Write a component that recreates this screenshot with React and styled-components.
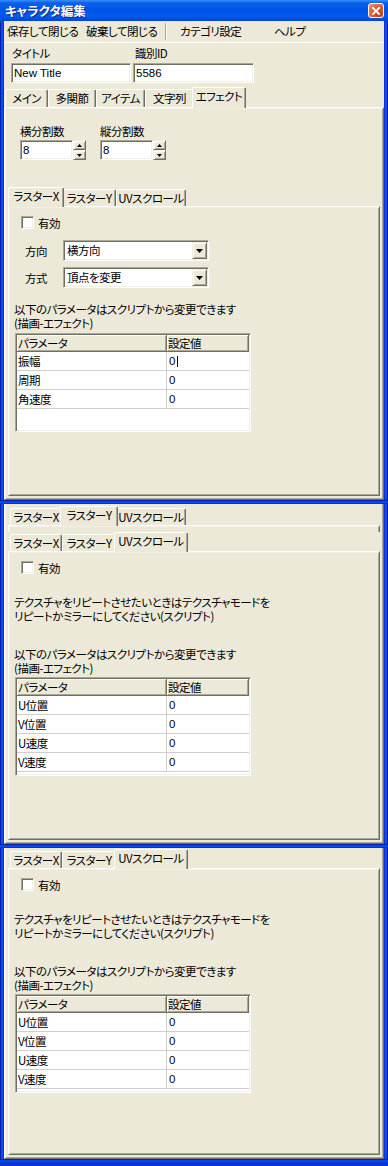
import React from "react";
import styled, { createGlobalStyle, css } from "styled-components";

const C = {
  face: "#ECE9D8",
  hi: "#FFFFFF",
  light: "#F1EFE2",
  shadow: "#ACA899",
  dark: "#716F64",
  grid: "#CFCFCF",
};

const GlobalStyle = createGlobalStyle`
  html, body { margin: 0; padding: 0; }
  body {
    background: ${C.face};
    font-family: "Noto Sans CJK JP", "Noto Sans", sans-serif;
    font-size: 11.5px;
    letter-spacing: -0.5px;
    color: #000;
    font-feature-settings: "palt";
  }
  #root { width: 388px; height: 1166px; overflow: hidden; }
`;

const sunken = css`
  border: 1px solid;
  border-color: ${C.shadow} ${C.hi} ${C.hi} ${C.shadow};
  box-shadow: inset 1px 1px ${C.dark}, inset -1px -1px ${C.light};
`;

const raised = css`
  border: 1px solid;
  border-color: ${C.light} ${C.dark} ${C.dark} ${C.light};
  box-shadow: inset 1px 1px ${C.hi}, inset -1px -1px ${C.shadow};
`;

const ascii = css`
  font-family: "Liberation Sans", "Noto Sans CJK JP", sans-serif;
  font-size: 11.5px;
  letter-spacing: 0;
`;

const Page = styled.div`
  width: 388px;
  height: 1166px;
  display: flex;
  flex-direction: column;
  overflow: hidden;
`;

const TitleBar = styled.div`
  height: 21px;
  flex: none;
  display: flex;
  align-items: center;
  justify-content: space-between;
  padding: 0 4px 0 5px;
  box-sizing: border-box;
  background: linear-gradient(
    180deg,
    #3b8ffb 0%,
    #0a60ea 14%,
    #0054e3 45%,
    #0058ec 82%,
    #0044cc 100%
  );
`;

const TitleText = styled.div`
  color: #fff;
  font-weight: bold;
  font-size: 12.5px;
  line-height: 21px;
  letter-spacing: 0;
  text-shadow: 1px 1px #0b2a8c;
`;

const CloseButton = styled.div`
  width: 16px;
  height: 15px;
  box-sizing: border-box;
  border: 1px solid #fff;
  border-radius: 3px;
  background: radial-gradient(circle at 75% 80%, #c0391a 0%, #e1603b 55%, #f0987a 100%);
  display: flex;
  align-items: center;
  justify-content: center;
`;

const Frame = styled.div`
  flex: none;
  height: ${(p) => p.$h}px;
  box-sizing: border-box;
  display: flex;
  flex-direction: column;
  padding: 0 4px;
  background: linear-gradient(
    to right,
    #0020b0 0 1px,
    #0a4cf0 1px 3px,
    #0834d0 3px 4px,
    ${C.face} 4px calc(100% - 4px),
    #0834d0 calc(100% - 4px) calc(100% - 3px),
    #0a4cf0 calc(100% - 3px) calc(100% - 1px),
    #0020a0 calc(100% - 1px)
  );
`;

const BlueBar = styled.div`
  flex: none;
  height: ${(p) => p.$h}px;
  background: linear-gradient(to bottom, #0020a8 0 1px, #0a46e8 1px 3px, #0836d4 3px);
`;

const MenuBar = styled.div`
  height: 22px;
  flex: none;
  box-sizing: border-box;
  display: flex;
  align-items: center;
  padding-left: 3px;
  border-bottom: 1px solid ${C.hi};
`;

const MenuItem = styled.div`
  width: ${(p) => p.$w}px;
  flex: none;
  line-height: 21px;
  white-space: nowrap;
`;

const MenuSeparator = styled.div`
  width: 0;
  height: 17px;
  border-left: 1px solid ${C.shadow};
  border-right: 1px solid ${C.hi};
  margin-right: 13px;
`;

const FieldRow = styled.div`
  height: 44px;
  flex: none;
  box-sizing: border-box;
  display: flex;
  gap: 2px;
  padding: 3px 0 0 7px;
`;

const Field = styled.div`
  width: ${(p) => p.$w}px;
  display: flex;
  flex-direction: column;
`;

const FieldLabel = styled.div`
  height: 14px;
  line-height: 14px;
  padding-left: ${(p) => p.$pl ?? 1}px;
  margin-bottom: 3px;
  white-space: nowrap;
`;

const TextInput = styled.div`
  height: 20px;
  box-sizing: border-box;
  ${sunken};
  background: #fff;
  padding-left: 2px;
  line-height: 18px;
  white-space: nowrap;
  ${ascii};
`;

const TabStrip = styled.div`
  flex: none;
  height: ${(p) => p.$h}px;
  display: flex;
  align-items: flex-end;
  padding-left: ${(p) => p.$pad}px;
  margin-left: ${(p) => p.$ml || 0}px;
  margin-top: ${(p) => p.$mt || 0}px;
`;

const Tab = styled.div`
  flex: none;
  box-sizing: border-box;
  width: ${(p) => p.$w + (p.$active ? 4 : 0)}px;
  height: ${(p) => (p.$active ? p.$h + 1 : p.$h - 2)}px;
  margin: 0 ${(p) => (p.$active ? -2 : 0)}px ${(p) => (p.$active ? -1 : 0)}px;
  border-top: 1px solid ${C.hi};
  border-left: 1px solid ${C.hi};
  border-right: 1px solid ${C.dark};
  box-shadow: inset -1px 0 ${C.shadow};
  border-radius: 2px 2px 0 0;
  background: ${C.face};
  text-align: center;
  line-height: 16px;
  white-space: nowrap;
  position: relative;
  z-index: ${(p) => (p.$active ? 1 : 0)};
`;

const OuterPanel = styled.div`
  flex: 1;
  min-height: 0;
  box-sizing: border-box;
  display: flex;
  flex-direction: column;
  border-left: 1px solid ${C.hi};
  border-right: 1px solid ${C.dark};
  border-bottom: 1px solid ${C.dark};
  border-top: ${(p) => (p.$continued ? "none" : `1px solid ${C.hi}`)};
  box-shadow: inset 1px ${(p) => (p.$continued ? 0 : 1)}px ${C.light},
    inset -1px -1px ${C.shadow};
  padding-top: ${(p) => p.$pt || 0}px;
`;

const InnerPanel = styled.div`
  flex: ${(p) => (p.$clip ? "none" : 1)};
  height: ${(p) => (p.$clip ? "7px" : "auto")};
  min-height: 0;
  box-sizing: border-box;
  display: flex;
  flex-direction: column;
  margin: 0 3px ${(p) => (p.$clip ? 0 : 3)}px 3px;
  border-top: 1px solid ${C.hi};
  border-left: 1px solid ${C.hi};
  border-right: 1px solid ${C.dark};
  border-bottom: ${(p) => (p.$clip ? "none" : `1px solid ${C.dark}`)};
  box-shadow: inset 1px 1px ${C.light},
    inset -1px ${(p) => (p.$clip ? 0 : -1)}px ${C.shadow};
`;

const SpinRow = styled.div`
  display: flex;
  gap: 14px;
  margin: 17px 0 0 15px;
`;

const SpinGroup = styled.div`
  display: flex;
  flex-direction: column;
`;

const SpinLabel = styled.div`
  line-height: 13px;
  height: 13px;
  margin-bottom: 2px;
  white-space: nowrap;
`;

const SpinBox = styled.div`
  display: flex;
`;

const SpinInput = styled.div`
  width: 53px;
  height: 20px;
  box-sizing: border-box;
  ${sunken};
  background: #fff;
  padding-left: 2px;
  line-height: 18px;
  ${ascii};
`;

const SpinButtons = styled.div`
  width: 13px;
  height: 20px;
  display: flex;
  flex-direction: column;
`;

const SpinButton = styled.div`
  flex: 1;
  box-sizing: border-box;
  ${raised};
  background: ${C.face};
  display: flex;
  align-items: center;
  justify-content: center;
`;

const CheckRow = styled.div`
  display: flex;
  align-items: center;
  gap: 4px;
  height: 13px;
  margin: 9px 0 0 12px;
`;

const CheckBox = styled.div`
  width: 13px;
  height: 13px;
  box-sizing: border-box;
  ${sunken};
  background: #fff;
`;

const SelectRow = styled.div`
  display: flex;
  align-items: center;
  margin: ${(p) => p.$mt}px 0 0 16px;
`;

const SelectLabel = styled.div`
  width: 38px;
  white-space: nowrap;
`;

const Select = styled.div`
  width: 146px;
  height: 21px;
  box-sizing: border-box;
  ${sunken};
  background: #fff;
  padding: 1px;
  display: flex;
  align-items: center;
`;

const SelectText = styled.div`
  flex: 1;
  padding-left: 2px;
  line-height: 17px;
  white-space: nowrap;
`;

const DropButton = styled.div`
  width: 15px;
  height: 17px;
  box-sizing: border-box;
  ${raised};
  background: ${C.face};
  display: flex;
  align-items: center;
  justify-content: center;
`;

const Note = styled.div`
  margin: ${(p) => p.$mt}px 0 0 5px;
  line-height: 14px;
  white-space: nowrap;
`;

const ListView = styled.div`
  width: 236px;
  height: 99px;
  flex: none;
  box-sizing: border-box;
  ${sunken};
  background: #fff;
  overflow: hidden;
  margin: ${(p) => p.$mt}px 0 0 6px;
  padding: 1px;
`;

const HeaderRow = styled.div`
  display: flex;
  height: 17px;
`;

const HeaderCell = styled.div`
  flex: ${(p) => (p.$w ? "none" : 1)};
  width: ${(p) => (p.$w ? `${p.$w}px` : "auto")};
  box-sizing: border-box;
  background: ${C.face};
  border-right: 1px solid ${C.dark};
  border-bottom: 1px solid ${C.dark};
  box-shadow: inset 1px 1px ${C.hi}, inset -1px -1px ${C.shadow};
  padding-left: 1px;
  line-height: 16px;
  white-space: nowrap;
`;

const Row = styled.div`
  display: flex;
  height: 19px;
  box-sizing: border-box;
  border-bottom: 1px solid ${C.grid};
`;

const Cell = styled.div`
  flex: ${(p) => (p.$w ? "none" : 1)};
  width: ${(p) => (p.$w ? `${p.$w}px` : "auto")};
  box-sizing: border-box;
  border-right: ${(p) => (p.$w ? `1px solid ${C.grid}` : "none")};
  padding-left: ${(p) => (p.$w ? 1 : 2)}px;
  line-height: 18px;
  white-space: nowrap;
  display: flex;
  align-items: center;
`;

const Num = styled.span`
  ${ascii};
`;

const Caret = styled.span`
  display: inline-block;
  width: 1px;
  height: 11px;
  background: #000;
  margin-left: 2px;
`;

const DownArrow = ({ w = 7, h = 4 }) => (
  <svg width={w} height={h} viewBox={`0 0 ${w} ${h}`}>
    <polygon points={`0,0 ${w},0 ${w / 2},${h}`} fill="#000" />
  </svg>
);

const UpArrow = ({ w = 5, h = 3 }) => (
  <svg width={w} height={h} viewBox={`0 0 ${w} ${h}`}>
    <polygon points={`0,${h} ${w},${h} ${w / 2},0`} fill="#000" />
  </svg>
);

const outerTabs = [
  ["メイン", 43],
  ["多関節", 48],
  ["アイテム", 49],
  ["文字列", 49],
  ["エフェクト", 50],
];

const innerTabs = [
  ["ラスターX", 52],
  ["ラスターY", 54],
  ["UVスクロール", 70],
];

function InnerTabs({ active, mt }) {
  return (
    <TabStrip $h={19} $pad={2} $ml={3} $mt={mt}>
      {innerTabs.map(([label, w], i) => (
        <Tab key={label} $w={w} $h={19} $active={i === active}>
          {label}
        </Tab>
      ))}
    </TabStrip>
  );
}

function ParamTable({ rows, mt, caretRow }) {
  return (
    <ListView $mt={mt}>
      <HeaderRow>
        <HeaderCell $w={150}>パラメータ</HeaderCell>
        <HeaderCell>設定値</HeaderCell>
      </HeaderRow>
      {rows.map((r, i) => (
        <Row key={r}>
          <Cell $w={150}>{r}</Cell>
          <Cell>
            <Num>0</Num>
            {i === caretRow && <Caret />}
          </Cell>
        </Row>
      ))}
    </ListView>
  );
}

function Enabled() {
  return (
    <CheckRow>
      <CheckBox />
      <span>有効</span>
    </CheckRow>
  );
}

function RasterContent() {
  return (
    <>
      <Enabled />
      <SelectRow $mt={11}>
        <SelectLabel>方向</SelectLabel>
        <Select>
          <SelectText>横方向</SelectText>
          <DropButton>
            <DownArrow />
          </DropButton>
        </Select>
      </SelectRow>
      <SelectRow $mt={6}>
        <SelectLabel>方式</SelectLabel>
        <Select>
          <SelectText>頂点を変更</SelectText>
          <DropButton>
            <DownArrow />
          </DropButton>
        </Select>
      </SelectRow>
      <Note $mt={14}>
        以下のパラメータはスクリプトから変更できます
        <br />
        (描画-エフェクト)
      </Note>
      <ParamTable rows={["振幅", "周期", "角速度"]} mt={3} caretRow={0} />
    </>
  );
}

function UVContent() {
  return (
    <>
      <Enabled />
      <Note $mt={21}>
        テクスチャをリピートさせたいときはテクスチャモードを
        <br />
        リピートかミラーにしてください(スクリプト)
      </Note>
      <Note $mt={24}>
        以下のパラメータはスクリプトから変更できます
        <br />
        (描画-エフェクト)
      </Note>
      <ParamTable rows={["U位置", "V位置", "U速度", "V速度"]} mt={2} />
    </>
  );
}

function Spinner({ label, value }) {
  return (
    <SpinGroup>
      <SpinLabel>{label}</SpinLabel>
      <SpinBox>
        <SpinInput>{value}</SpinInput>
        <SpinButtons>
          <SpinButton>
            <UpArrow />
          </SpinButton>
          <SpinButton>
            <DownArrow w={5} h={3} />
          </SpinButton>
        </SpinButtons>
      </SpinBox>
    </SpinGroup>
  );
}

export default function App() {
  return (
    <>
      <GlobalStyle />
      <Page>
        <TitleBar>
          <TitleText>キャラクタ編集</TitleText>
          <CloseButton>
            <svg width="8" height="8" viewBox="0 0 8 8">
              <path d="M1 1 L7 7 M7 1 L1 7" stroke="#fff" strokeWidth="1.8" strokeLinecap="square" />
            </svg>
          </CloseButton>
        </TitleBar>

        <Frame $h={479}>
          <MenuBar>
            <MenuItem $w={79}>保存して閉じる</MenuItem>
            <MenuItem $w={79}>破棄して閉じる</MenuItem>
            <MenuSeparator />
            <MenuItem $w={94}>カテゴリ設定</MenuItem>
            <MenuItem $w={40}>ヘルプ</MenuItem>
          </MenuBar>
          <FieldRow>
            <Field $w={120}>
              <FieldLabel>タイトル</FieldLabel>
              <TextInput>New Title</TextInput>
            </Field>
            <Field $w={121}>
              <FieldLabel $pl={2}>識別ID</FieldLabel>
              <TextInput>5586</TextInput>
            </Field>
          </FieldRow>
          <TabStrip $h={20} $pad={1}>
            {outerTabs.map(([label, w], i) => (
              <Tab key={label} $w={w} $h={20} $active={i === 4}>
                {label}
              </Tab>
            ))}
          </TabStrip>
          <OuterPanel>
            <SpinRow>
              <Spinner label="横分割数" value="8" />
              <Spinner label="縦分割数" value="8" />
            </SpinRow>
            <InnerTabs active={0} mt={27} />
            <InnerPanel>
              <RasterContent />
            </InnerPanel>
          </OuterPanel>
        </Frame>

        <BlueBar $h={4} />

        <Frame $h={340}>
          <OuterPanel $continued $pt={2}>
            <InnerTabs active={1} />
            <InnerPanel $clip />
            <InnerTabs active={2} />
            <InnerPanel>
              <UVContent />
            </InnerPanel>
          </OuterPanel>
        </Frame>

        <BlueBar $h={4} />

        <Frame $h={311}>
          <OuterPanel $continued $pt={1}>
            <InnerTabs active={2} />
            <InnerPanel>
              <UVContent />
            </InnerPanel>
          </OuterPanel>
        </Frame>

        <BlueBar $h={7} />
      </Page>
    </>
  );
}
